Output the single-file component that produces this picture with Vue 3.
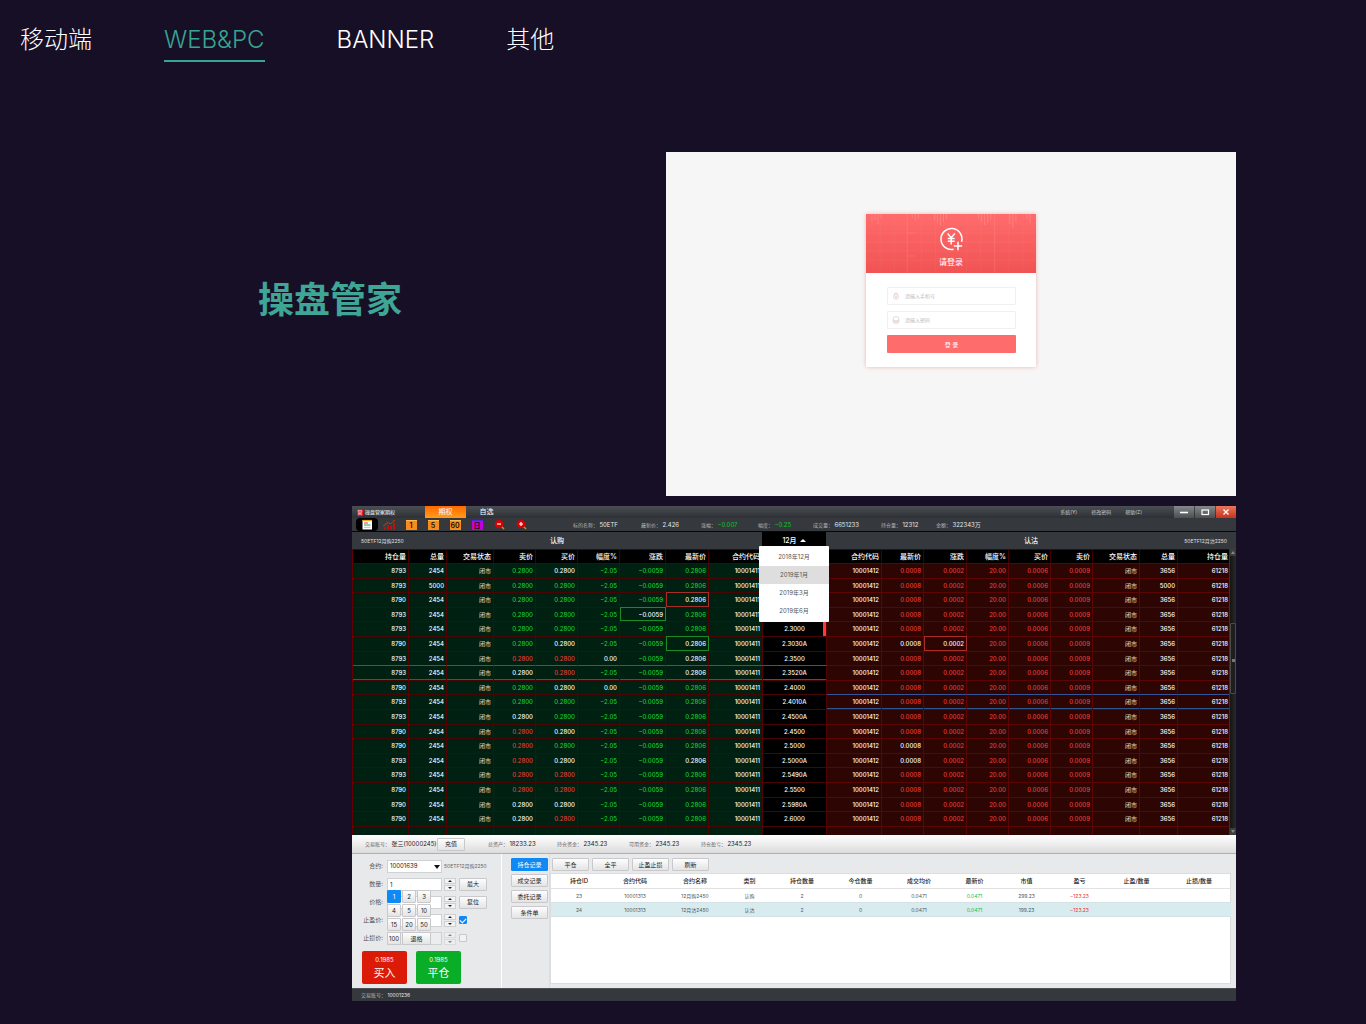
<script setup>
const nav = [
  { label: '移动端' },
  { label: 'WEB&PC', active: true },
  { label: 'BANNER' },
  { label: '其他' }
]

const menus = ['系统(Y)', '修改密码', '帮助(Z)']

const stats = [
  { label: '标的名称', value: '50ETF' },
  { label: '最新价', value: '2.426' },
  { label: '涨幅', value: '−0.007', down: true },
  { label: '幅度', value: '−0.25', down: true },
  { label: '成交量', value: '6651233' },
  { label: '持仓量', value: '12312' },
  { label: '金额', value: '322343万' }
]

const months = ['2018年12月', '2019年1月', '2019年3月', '2019年6月']

const widths = [56, 38, 47, 42, 42, 42, 46, 43, 54, 64, 55, 42, 43, 42, 42, 42, 47, 38, 51]
const callHeads = ['持仓量', '总量', '交易状态', '卖价', '买价', '幅度%', '涨跌', '最新价', '合约代码']
const putHeads = ['合约代码', '最新价', '涨跌', '幅度%', '买价', '卖价', '交易状态', '总量', '持仓量']

// the open month menu lies over the first four strikes
const strikes = ['', '', '', '', '2.3000', '2.3030A', '2.3500', '2.3520A', '2.4000',
  '2.4010A', '2.4500A', '2.4500', '2.5000', '2.5000A', '2.5490A', '2.5500', '2.5980A', '2.6000']
const holdings = ['8793', '8793', '8790', '8793', '8793', '8790', '8793', '8793', '8790',
  '8793', '8793', '8790', '8790', '8793', '8793', '8790', '8790', '8790']

// one letter per row: g = falling, r = rising, w = unchanged
const ask = 'ggggggrwggwrrrrrww'
const bid = 'wggggwrrwggwgwrrwr'
const last = 'ggwggwwwgggggwgggg'
const putLast = 'rrrrrwrrrrrrwwrrrr'

const rows = strikes.map((strike, i) => {
  const flat = i === 6 || i === 8
  const total = i === 1
  return {
    strike,
    call: [
      { t: holdings[i] },
      { t: total ? '5000' : '2454' },
      { t: '闭市', c: 'dim' },
      { t: '0.2800', c: ask[i] },
      { t: '0.2800', c: bid[i] },
      { t: flat ? '0.00' : '−2.05', c: flat ? 'w' : 'g' },
      { t: '−0.0059', c: i === 3 ? 'w box-g' : 'g' },
      { t: '0.2806', c: [last[i], i === 2 ? 'box-r' : '', i === 5 ? 'box-g' : ''] },
      { t: '10001411' }
    ],
    put: [
      { t: '10001412' },
      { t: '0.0008', c: putLast[i] },
      { t: '0.0002', c: i === 5 ? 'w box-r' : 'r' },
      { t: '20.00', c: 'r' },
      { t: '0.0006', c: 'r' },
      { t: '0.0009', c: 'r' },
      { t: '闭市', c: 'dim' },
      { t: total ? '5000' : '3656' },
      { t: '61218' }
    ]
  }
})

const funds = [
  { label: '总资产', value: '18233.23' },
  { label: '持仓资金', value: '2345.23' },
  { label: '可用资金', value: '2345.23' },
  { label: '持仓盈亏', value: '2345.23' }
]

const keys = ['1', '2', '3', '4', '5', '10', '15', '20', '50', '100', '退格']
const records = ['持仓记录', '成交记录', '委托记录', '条件单']
const actions = ['平仓', '全平', '止盈止损', '刷新']

const posWidths = [56, 56, 64, 45, 60, 57, 60, 51, 53, 53, 61, 64]
const posHeads = ['持仓ID', '合约代码', '合约名称', '类别', '持仓数量', '今仓数量', '成交均价', '最新价', '市值', '盈亏', '止盈/数量', '止损/数量']
const positions = [
  ['23', '10001313', '12月购2450', '认购', '2', '0', '0.0471', '0.0471', '299.23', '−123.23', '', ''],
  ['24', '10001313', '12月沽2450', '认沽', '2', '0', '0.0471', '0.0471', '199.23', '−123.23', '', '']
]
</script>

<template>
  <div class="page">
    <nav class="nav">
      <a v-for="n in nav" :key="n.label" href="#" :class="{ active: n.active }">{{ n.label }}</a>
    </nav>

    <section class="intro">
      <h1>操盘管家</h1>
      <div class="login-shot">
        <form class="card" @submit.prevent>
          <header>
            <svg class="grid-art" viewBox="0 0 169 59" preserveAspectRatio="none" aria-hidden="true">
              <g stroke="#fff" stroke-opacity=".1" stroke-width="1">
                <path d="M0 10H169M0 19H169M0 28H169M0 37H169M0 46H169" stroke-opacity=".05" />
                <path d="M6 0V8M9 0V6M12 0V10M15 0V4M46 0V4M49 0V7M52 0V5M68 0V6M71 0V9M74 0V11M77 0V8M80 0V5M112 0V5M115 0V8M118 0V11M121 0V9M124 0V6M143 0V10M146 0V14M149 0V8M160 0V5M163 0V9" stroke-opacity=".16" />
                <path d="M41 0V59M128 0V59M41 19H49M41 42H49" />
                <path d="M14 0V59M28 0V59M55 0V59M69 0V59M100 0V59M114 0V59M142 0V59M156 0V59" stroke-opacity=".04" />
              </g>
            </svg>
            <svg class="yen" viewBox="0 0 26 26" fill="none" stroke="#fff" stroke-width="1.5" aria-hidden="true">
              <path d="M23.6 15.8A10.5 10.5 0 1 0 15.6 23.3" />
              <path d="M9.6 7.5l3.6 4.2 3.6-4.2M13.2 12v6.5M9.8 12.4h6.8M9.8 15.2h6.8" stroke-width="1.5" />
              <path d="M20 15.8v8.4M15.8 20h8.4" />
            </svg>
            <h2>请登录</h2>
          </header>
          <div class="fields">
            <label class="field">
              <svg viewBox="0 0 8 8" fill="none" stroke="#dcc0c0" stroke-width=".7" aria-hidden="true">
                <circle cx="4" cy="4.8" r="2.4" /><path d="M2.6 2.8V1.6Q4-.2 5.4 1.6V2.8M3 4.2L4 5L5 4.2M4 5V6.2" />
              </svg>
              <input type="text" placeholder="请输入手机号" aria-label="手机号" />
            </label>
            <label class="field">
              <svg viewBox="0 0 8 8" fill="none" stroke="#dcc0c0" stroke-width=".7" aria-hidden="true">
                <rect x="1.2" y=".8" width="5.6" height="6.4" rx="2" /><path d="M1.2 4.8H6.8M3 4.8V6.8M5 4.8V6.8" />
              </svg>
              <input type="password" placeholder="请输入密码" aria-label="密码" />
            </label>
            <button>登 录</button>
          </div>
        </form>
      </div>
    </section>

    <main class="app">
      <header class="titlebar">
        <span class="logo">管</span>
        <span class="name">操盘管家期权</span>
        <button class="tab on">期权</button>
        <button class="tab">自选</button>
        <div class="menus">
          <a v-for="m in menus" :key="m" href="#">{{ m }}</a>
        </div>
        <div class="win">
          <button aria-label="最小化"><svg viewBox="0 0 20 12"><path d="M6 6.5H14" stroke="#fff" stroke-width="1.6" /></svg></button>
          <button aria-label="最大化"><svg viewBox="0 0 20 12"><rect x="7" y="4" width="6.5" height="4.5" fill="none" stroke="#fff" stroke-width="1.2" /></svg></button>
          <button class="close" aria-label="关闭"><svg viewBox="0 0 20 12"><path d="M7.5 3.5L12.5 8.5M12.5 3.5L7.5 8.5" stroke="#fff" stroke-width="1.3" /></svg></button>
        </div>
      </header>

      <div class="toolbar">
        <button class="tool on" aria-label="报价">
          <svg viewBox="0 0 22 13"><rect x="6.5" y="2" width="9.5" height="9.5" fill="#fff" /><path d="M6.5 2.5H16" stroke="#f9a21b" stroke-width="1.2" /><path d="M8 5H12" stroke="#f33" stroke-width="1" /><path d="M8 7H14.5" stroke="#2aa05a" stroke-width="1" /><path d="M8 9.3H14.5" stroke="#aaa" stroke-width=".8" /></svg>
        </button>
        <button class="tool" aria-label="走势">
          <svg viewBox="0 0 22 13"><path d="M7 11.5V9M10 11.5V7M13 11.5V7.5M16 11.5V5" stroke="#c41208" stroke-width="1.9" /><path d="M5.5 8L9.5 4.5L12.5 6L16.8 2.2" fill="none" stroke="#d83a08" stroke-width="1.1" stroke-dasharray="1.6 .6" /></svg>
        </button>
        <button class="tool"><span class="period">1</span></button>
        <button class="tool"><span class="period">5</span></button>
        <button class="tool"><span class="period">60</span></button>
        <button class="tool"><span class="period day">日</span></button>
        <button class="tool" aria-label="缩小">
          <svg viewBox="0 0 22 13"><path d="M13.5 8.5L16 11" stroke="#e08a1e" stroke-width="1.4" /><circle cx="11" cy="6" r="4.3" fill="#d80000" /><path d="M9 6H13" stroke="#fff" stroke-width="1.2" /></svg>
        </button>
        <button class="tool" aria-label="放大">
          <svg viewBox="0 0 22 13"><path d="M13.5 8.5L16 11" stroke="#e08a1e" stroke-width="1.4" /><circle cx="11" cy="6" r="4.3" fill="#d80000" /><path d="M9 6H13M11 4V8" stroke="#fff" stroke-width="1.2" /></svg>
        </button>
        <div class="stats">
          <span v-for="s in stats" :key="s.label">{{ s.label }}： <b :class="{ down: s.down }">{{ s.value }}</b></span>
        </div>
      </div>

      <div class="sides">
        <div class="side"><small>50ETF12月购2250</small><strong>认购</strong></div>
        <div class="month">
          <button class="month-btn" aria-expanded="true">12月 <i></i></button>
          <ul>
            <li v-for="(m, i) in months" :key="m"><button :class="{ hover: i === 1 }">{{ m }}</button></li>
          </ul>
        </div>
        <div class="side put-side"><strong>认沽</strong><small>50ETF12月沽2250</small></div>
      </div>

      <div class="quotes">
        <table>
          <colgroup><col v-for="(w, i) in widths" :key="i" :style="{ width: w + 'px' }" /></colgroup>
          <thead>
            <tr>
              <th v-for="h in callHeads" :key="h">{{ h }}</th>
              <th></th>
              <th v-for="h in putHeads" :key="h">{{ h }}</th>
            </tr>
          </thead>
          <tbody>
            <tr v-for="(r, i) in rows" :key="i">
              <td v-for="(c, j) in r.call" :key="'c' + j" class="call" :class="[c.c, { mark: i === 7 }]">{{ c.t }}</td>
              <td class="strike" :class="{ mark: i === 7, current: i === 4 }">{{ r.strike }}</td>
              <td v-for="(c, j) in r.put" :key="'p' + j" class="put" :class="[c.c, { mark: i === 9 }]">{{ c.t }}</td>
            </tr>
          </tbody>
          <tfoot>
            <tr>
              <td v-for="n in 9" :key="'a' + n" class="call"></td>
              <td class="strike"></td>
              <td v-for="n in 9" :key="'b' + n" class="put"></td>
            </tr>
          </tfoot>
        </table>
        <div class="scroll"><i class="cap up"></i><i class="thumb"></i><i class="cap dn"></i></div>
      </div>

      <div class="account">
        <span class="who">交易账号： <b>张三(10000245)</b></span>
        <button class="btn">充值</button>
        <div class="funds">
          <span v-for="f in funds" :key="f.label">{{ f.label }}： <b>{{ f.value }}</b></span>
        </div>
      </div>

      <div class="desk">
        <form class="order" @submit.prevent>
          <div class="line">
            <label for="contract">合约:</label>
            <span class="select"><select id="contract"><option>10001639</option></select></span>
            <span class="hint">50ETF12月购2250</span>
          </div>
          <div class="line">
            <label for="qty">数量:</label>
            <input id="qty" class="box" type="text" value="1" />
            <span class="spin"><button aria-label="增加"></button><button aria-label="减少"></button></span>
            <button class="btn">最大</button>
            <div class="keypad">
              <button v-for="(k, i) in keys" :key="k" class="btn" :class="{ on: i === 0, wide: i === 10 }">{{ k }}</button>
            </div>
          </div>
          <div class="line">
            <label for="price">价格:</label>
            <input id="price" class="box" type="text" />
            <span class="spin"><button aria-label="增加"></button><button aria-label="减少"></button></span>
            <button class="btn">复位</button>
          </div>
          <div class="line">
            <label for="profit">止盈价:</label>
            <input id="profit" class="box" type="text" />
            <span class="spin"><button aria-label="增加"></button><button aria-label="减少"></button></span>
            <input class="check" type="checkbox" checked aria-label="启用止盈" />
          </div>
          <div class="line">
            <label for="loss">止损价:</label>
            <input id="loss" class="box off" type="text" disabled />
            <span class="spin off"><button aria-label="增加" disabled></button><button aria-label="减少" disabled></button></span>
            <input class="check" type="checkbox" aria-label="启用止损" />
          </div>
          <div class="trade">
            <button class="buy"><small>0.1985</small>买入</button>
            <button class="sell"><small>0.1985</small>平仓</button>
          </div>
        </form>

        <div class="records">
          <button v-for="(r, i) in records" :key="r" class="btn" :class="{ on: i === 0 }">{{ r }}</button>
        </div>

        <section class="positions">
          <div class="actions">
            <button v-for="a in actions" :key="a" class="btn">{{ a }}</button>
          </div>
          <div class="sheet">
            <table>
              <colgroup><col v-for="(w, i) in posWidths" :key="i" :style="{ width: w + 'px' }" /></colgroup>
              <thead><tr><th v-for="h in posHeads" :key="h">{{ h }}</th></tr></thead>
              <tbody>
                <tr v-for="p in positions" :key="p[0]">
                  <td v-for="(v, j) in p" :key="j" :class="{ green: j === 7, red: j === 9 }">{{ v }}</td>
                </tr>
              </tbody>
            </table>
          </div>
        </section>
      </div>

      <footer class="status">交易账号： <b>10001236</b></footer>
    </main>
  </div>
</template>

<style>
body {
  margin: 0;
  background: #170f26;
}
</style>

<style scoped>
* {
  box-sizing: border-box;
}
.page {
  min-height: 100vh;
  background: #170f26;
  color: #fff;
  font-family: Inter, "Noto Sans CJK SC", sans-serif;
}
button,
input,
select {
  margin: 0;
  padding: 0;
  border: 0;
  background: none;
  color: inherit;
  font: inherit;
}
a {
  color: inherit;
  text-decoration: none;
}
b {
  font-weight: 400;
}
svg {
  display: block;
}

/* Navigation */
.nav {
  display: flex;
  gap: 72px;
  padding: 20px 20px 0;
  height: 152px;
  align-items: flex-start;
}
.nav a {
  font-size: 24px;
  line-height: 40px;
  height: 42px;
  font-weight: 300;
}
.nav .active {
  color: #36a593;
  border-bottom: 2px solid #36a593;
}

/* Title and login screen */
.intro {
  display: flex;
  margin-right: 130px;
}
h1 {
  flex: 1;
  margin: 0;
  padding: 130px 0 0 258px;
  font-size: 36px;
  line-height: 36px;
  font-weight: 700;
  color: #3fa696;
}
.login-shot {
  width: 570px;
  height: 344px;
  padding-top: 62px;
  background: #f6f6f6;
}
.card {
  width: 170px;
  margin: 0 auto;
  padding-bottom: 14px;
  background: #fff;
  border-radius: 1px;
  box-shadow: 0 0 4px #f0b4b4;
}
.card header {
  position: relative;
  height: 59px;
  padding-top: 12px;
  background: linear-gradient(#ff6b6b, #f15353);
  text-align: center;
}
.grid-art {
  position: absolute;
  inset: 0;
  width: 100%;
  height: 100%;
}
.yen {
  width: 26px;
  height: 26px;
  margin: 0 auto;
}
h2 {
  margin: 4px 0 0;
  font-size: 8px;
  line-height: 12px;
  font-weight: 400;
}
.fields {
  display: flex;
  flex-direction: column;
  gap: 6px;
  padding: 14px 20px 0 21px;
}
.field {
  display: flex;
  align-items: center;
  gap: 5px;
  height: 18px;
  padding-left: 4px;
  border: 1px solid #f1efef;
  border-radius: 1px;
}
.field svg {
  width: 8px;
  height: 8px;
}
.field input {
  flex: 1;
  min-width: 0;
  font-size: 5px;
  color: #888;
}
.field input::placeholder {
  color: #bdbdbd;
}
.fields button {
  height: 18px;
  border-radius: 1px;
  background: #ff6c6c;
  font-size: 6px;
}

/* Trading terminal */
.app {
  margin: 10px 130px 0 352px;
  font-size: 6px;
  line-height: 10px;
}
.titlebar {
  display: flex;
  align-items: center;
  height: 12px;
  padding-left: 5px;
  background: linear-gradient(#4a4f54, #2d3034);
}
.logo {
  width: 6px;
  height: 7px;
  border-radius: 1px;
  background: #d11;
  font-size: 5px;
  line-height: 7px;
  text-align: center;
}
.name {
  width: 62px;
  padding-left: 2px;
  font-size: 5px;
}
.tab {
  width: 41px;
  height: 12px;
  font-size: 7px;
  line-height: 12px;
}
.tab.on {
  background: linear-gradient(#ff6a00, #ff9c1a);
}
.menus {
  display: flex;
  gap: 14px;
  margin-left: auto;
  padding-right: 32px;
  font-size: 5px;
  color: #c8cacc;
}
.win {
  display: flex;
  gap: 1px;
}
.win button {
  width: 20px;
  height: 12px;
  background: linear-gradient(#85888b, #4c4f52);
}
.win .close {
  background: linear-gradient(#e8765c, #c8321c);
}
.toolbar {
  display: flex;
  height: 14px;
  padding-left: 4px;
  background: #35383d;
  border-bottom: 1px solid #08080a;
}
.tool {
  display: flex;
  justify-content: center;
  align-items: center;
  width: 22px;
  height: 13px;
}
.tool.on {
  background: #000;
  border-radius: 4px;
}
.tool svg {
  width: 22px;
  height: 13px;
}
.period {
  width: 11px;
  height: 10px;
  border-top: 1px solid #ffb74d;
  background: #f98a1c;
  color: #1a0d00;
  font-size: 7px;
  line-height: 9px;
  font-weight: 600;
}
.period.day {
  background: #c400e0;
  border-color: #5a1ee0;
}
.stats {
  display: grid;
  grid-template-columns: 68px 60px 57px 55px 68px 55px auto;
  margin-left: 41px;
  line-height: 13px;
  white-space: nowrap;
  font-size: 5px;
  color: #b2b5b8;
}
.stats b {
  color: #e4e5e6;
  font-size: 6px;
}
.stats .down {
  color: #14c42c;
}

.sides {
  display: flex;
  height: 17px;
  background: #35383d;
}
.side {
  flex: 1;
  display: grid;
  grid-template-columns: 1fr auto 1fr;
  align-items: center;
  padding: 0 9px;
}
.side small {
  font-size: 5px;
  color: #e0e1e2;
}
.side strong {
  grid-column: 2;
  font-size: 7px;
  font-weight: 500;
}
.put-side small {
  text-align: right;
}
.month {
  position: relative;
  width: 64px;
  background: #000;
}
.month-btn {
  display: flex;
  justify-content: center;
  align-items: center;
  gap: 3px;
  width: 100%;
  height: 17px;
  font-size: 7px;
  font-weight: 500;
}
.month-btn i {
  border: 3px solid transparent;
  border-top: 0;
  border-bottom: 3px solid #fff;
}
.month ul {
  position: absolute;
  z-index: 2;
  top: 14px;
  left: -3px;
  width: 70px;
  margin: 0;
  padding: 2px 0;
  list-style: none;
  background: #fff;
  border-radius: 1px;
}
.month li button {
  display: block;
  width: 100%;
  height: 18px;
  color: #555;
}
.month li .hover {
  background: #dedede;
}

.quotes {
  display: flex;
  background: #000;
}
.quotes table {
  flex: 1;
  min-width: 0;
  width: 100%;
  table-layout: fixed;
  border-spacing: 0;
  border-left: 1px solid #600;
}
.quotes th {
  height: 14px;
  padding: 0 2px 0 0;
  border-top: 1px solid #500;
  border-right: 1px solid #400;
  background: #000;
  font-size: 7px;
  font-weight: 500;
  text-align: right;
  white-space: nowrap;
}
.quotes td {
  height: 15px;
  padding: 0 2px 0 0;
  border-right: 1px solid #500303;
  border-top: 1px solid #4a0404;
  font-weight: 500;
  text-align: right;
}
.quotes tbody tr:nth-child(5n + 2) td,
.quotes tbody tr:nth-child(5n + 4) td {
  height: 14px;
}
.quotes tfoot td {
  height: 9px;
}
.call {
  background: #002011;
}
.put {
  background: #2d0604;
}
.quotes .put {
  border-color: #5c0505;
}
.quotes .strike {
  padding: 0;
  background: #000;
  text-align: center;
}
.quotes .current {
  box-shadow: inset -3px 0 #ff3838;
}
.quotes th:last-child,
.quotes td:last-child {
  padding-right: 1px;
  border-right: 0;
}
.dim {
  color: #c6cbc7;
}
.g {
  color: #18d22e;
}
.r {
  color: #ee3d36;
}
.box-g {
  outline: 1px solid #1c8a26;
  outline-offset: -1px;
}
.box-r {
  outline: 1px solid #a82c28;
  outline-offset: -1px;
}
.quotes .mark {
  border-top-color: #34559c;
  box-shadow: inset 0 -1px #2a5590;
}
.scroll {
  position: relative;
  width: 8px;
  background: linear-gradient(90deg, #151515, #2a2a2a);
  border-left: 1px solid #333;
}
.scroll i {
  position: absolute;
  left: 0;
  right: 0;
}
.cap {
  height: 7px;
  background: #3c3d3f;
}
.up {
  top: 0;
}
.dn {
  bottom: 0;
}
.cap::after {
  content: "";
  position: absolute;
  left: 1px;
  top: 2px;
  border: 2px solid transparent;
}
.up::after {
  border-top: 0;
  border-bottom: 3px solid #888;
}
.dn::after {
  border-bottom: 0;
  border-top: 3px solid #888;
}
.thumb {
  top: 26%;
  height: 71px;
  border: 1px solid #4a4a4a;
  border-radius: 1px;
  background: #1e1e1e;
}
.thumb::after {
  content: "";
  position: absolute;
  left: 1px;
  top: 50%;
  width: 3px;
  height: 3px;
  background: #777;
}

/* Account strip */
.account {
  display: flex;
  align-items: center;
  height: 19px;
  padding-left: 13px;
  border-bottom: 1px solid #b0b0b0;
  background: linear-gradient(#fff, #dcdcdc);
  color: #666;
  white-space: nowrap;
  font-size: 5px;
}
.account b {
  color: #222;
  font-size: 6px;
}
.who {
  width: 72px;
}
.btn {
  width: 28px;
  height: 13px;
  border: 1px solid #c9c9cb;
  border-radius: 1px;
  background: linear-gradient(#fdfdfd, #e4e4e4);
  color: #222;
  font-size: 6px;
  line-height: 10px;
  text-align: center;
}
.btn.on {
  border-color: #1089f5;
  background: #1089f5;
  color: #fff;
}
.funds {
  display: grid;
  grid-template-columns: 69px 72px 72px auto;
  margin-left: 23px;
}

.desk {
  display: flex;
  background: #e8e9eb;
  color: #222;
}
.order {
  display: flex;
  flex-direction: column;
  gap: 4px;
  width: 150px;
  padding: 5px 0 4px;
  border-right: 1px solid #fff;
}
.line {
  position: relative;
  display: flex;
  align-items: center;
  height: 14px;
}
.line label {
  width: 31px;
  margin-right: 4px;
  color: #555;
  text-align: right;
}
.box,
.select select {
  width: 55px;
  height: 13px;
  padding: 0 2px;
  border: 1px solid #d0d1d3;
  background: #fff;
}
.box.off {
  background: #ededef;
}
.select {
  position: relative;
}
.select select {
  display: block;
  appearance: none;
}
.select::after {
  content: "";
  position: absolute;
  right: 2px;
  top: 5px;
  border: 3px solid transparent;
  border-top: 4px solid #111;
  border-bottom: 0;
}
.hint {
  margin-left: 2px;
  color: #666;
  font-size: 5px;
  white-space: nowrap;
}
.spin {
  display: flex;
  flex-direction: column;
  gap: 1px;
  width: 12px;
  margin: 0 3px 0 2px;
}
.spin button {
  display: flex;
  justify-content: center;
  align-items: center;
  height: 6px;
  border: 1px solid #cfcfd1;
  background: #f4f4f5;
}
.spin button::after {
  content: "";
  border: 2px solid transparent;
  border-top: 0;
  border-bottom: 2px solid #222;
}
.spin button:last-child::after {
  border-top: 2px solid #222;
  border-bottom: 0;
}
.spin.off {
  opacity: .5;
}
.check {
  appearance: none;
  width: 8px;
  height: 8px;
  border: 1px solid #c8c8ca;
  border-radius: 1px;
  background: #f2f2f3;
}
.check:checked {
  display: flex;
  justify-content: center;
  border-color: #1089f5;
  background: #1089f5;
}
.check:checked::after {
  content: "";
  width: 3px;
  height: 5px;
  border: solid #fff;
  border-width: 0 1px 1px 0;
  transform: rotate(45deg);
}
.keypad {
  position: absolute;
  z-index: 1;
  left: 35px;
  top: 13px;
  display: grid;
  grid-template-columns: 14px 14px 14px;
  gap: 1px;
}
.keypad .btn {
  width: auto;
}
.keypad .wide {
  grid-column: span 2;
}
.trade {
  display: flex;
  gap: 9px;
  padding: 2px 0 0 10px;
}
.trade button {
  width: 45px;
  height: 33px;
  border-radius: 2px;
  color: #fff;
  font-size: 11px;
  line-height: 16px;
}
.trade small {
  display: block;
  font-size: 6px;
  line-height: 10px;
}
.buy {
  background: #dc1a08;
}
.sell {
  background: #09ad28;
}
.records {
  display: flex;
  flex-direction: column;
  gap: 3px;
  width: 48px;
  padding: 4px 0 0 9px;
  border-right: 1px solid #dcdde0;
}
.records .btn {
  width: 37px;
}
.positions {
  flex: 1;
  min-width: 0;
  display: flex;
  flex-direction: column;
  padding: 4px 5px 4px 0;
}
.actions {
  display: flex;
  gap: 3px;
  padding: 0 0 2px 2px;
}
.actions .btn {
  width: 37px;
}
.sheet {
  flex: 1;
  border: 1px solid #dcdde0;
  background: #fff;
}
.sheet table {
  width: 100%;
  table-layout: fixed;
  border-spacing: 0;
}
.sheet th {
  height: 15px;
  padding: 0;
  border-bottom: 1px solid #e2e2e2;
  font-weight: 500;
  white-space: nowrap;
}
.sheet td {
  height: 14px;
  padding: 0;
  border-bottom: 1px solid #d4e2e5;
  color: #555;
  font-size: 5px;
  text-align: center;
}
.sheet tr:nth-child(2) td {
  background: #d8ecf0;
}
.sheet td.green {
  color: #17b53a;
}
.sheet td.red {
  color: #e8352c;
}
.status {
  height: 13px;
  padding-left: 9px;
  border-top: 1px solid #4c4f54;
  background: #35383d;
  color: #b2b5b8;
  font-size: 5px;
  line-height: 12px;
}
.status b {
  color: #e4e5e6;
}
</style>
